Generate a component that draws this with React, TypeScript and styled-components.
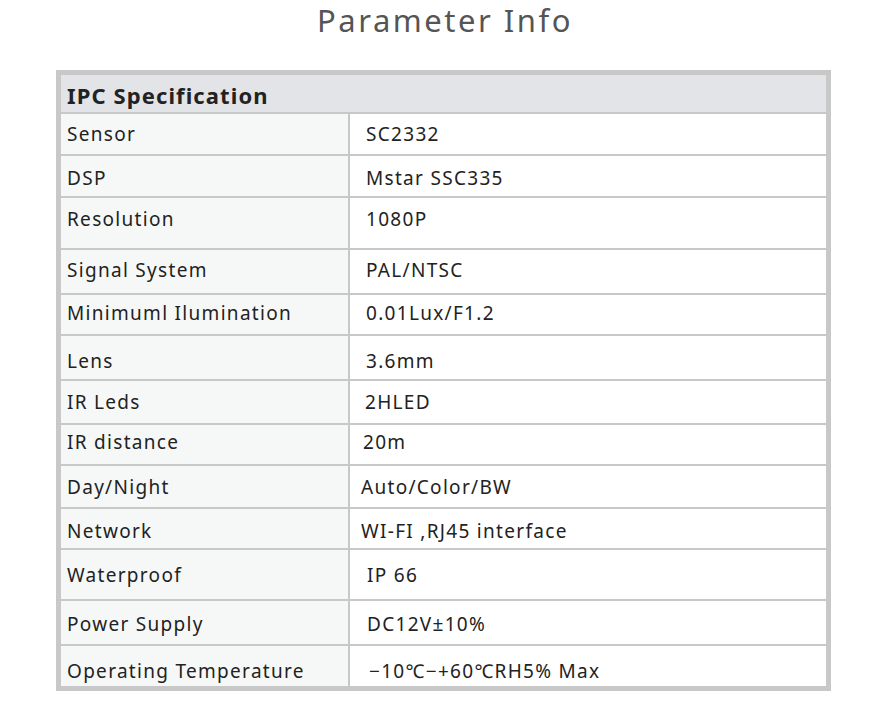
import React from "react";
import styled, { createGlobalStyle } from "styled-components";

const Global = createGlobalStyle`
  html, body { margin: 0; padding: 0; background: #ffffff; }
  body { font-family: "Noto Sans", "Noto Sans CJK KR", sans-serif; }
`;

const Page = styled.div`
  width: 882px;
  display: flex;
  flex-direction: column;
  align-items: flex-start;
`;

const Title = styled.h1`
  align-self: stretch;
  margin: 0;
  padding-top: 1px;
  height: 69px;
  text-align: center;
  font-size: 31px;
  line-height: 38px;
  font-weight: 400;
  letter-spacing: 2.5px;
  color: #555555;
  padding-left: 8px;
`;

const Table = styled.div`
  margin-left: 56px;
  width: 765px;
  border: 5px solid #c8c8c8;
  display: flex;
  flex-direction: column;
  background: #ffffff;
`;

const Header = styled.div`
  box-sizing: border-box;
  height: 39px;
  background: #e3e4e7;
  border-bottom: 2px solid #c8c8c8;
  display: flex;
  align-items: center;
  padding-left: 6px;
  padding-top: 3px;
  font-size: 22px;
  font-weight: 700;
  letter-spacing: 1.1px;
  color: #222222;
`;

const Row = styled.div<{ $h: number; $last?: boolean }>`
  display: grid;
  grid-template-columns: 287px 476px;
  column-gap: 2px;
  background: #c8c8c8;
  height: ${(p) => p.$h}px;
  border-bottom: ${(p) => (p.$last ? "0" : "2px solid #c8c8c8")};
  box-sizing: content-box;
`;

const Cell = styled.div<{ $label?: boolean; $indent: number; $shift: number }>`
  display: flex;
  align-items: center;
  background: ${(p) => (p.$label ? "#f6f8f8" : "#ffffff")};
  padding-left: ${(p) => p.$indent}px;
  padding-top: ${(p) => (p.$shift > 0 ? p.$shift : 0)}px;
  padding-bottom: ${(p) => (p.$shift < 0 ? -p.$shift : 0)}px;
  font-size: 19px;
  letter-spacing: 1.3px;
  color: #222222;
  white-space: nowrap;
`;

type Spec = { label: string; value: string; h: number; vi: number; shift: number };

const rows: Spec[] = [
  { label: "Sensor", value: "SC2332", h: 40, vi: 16, shift: 0 },
  { label: "DSP", value: "Mstar SSC335", h: 40, vi: 16, shift: 4 },
  { label: "Resolution", value: "1080P", h: 50, vi: 16, shift: -8 },
  { label: "Signal System", value: "PAL/NTSC", h: 43, vi: 16, shift: -3 },
  { label: "Minimuml Ilumination", value: "0.01Lux/F1.2", h: 39, vi: 16, shift: -4 },
  { label: "Lens", value: "3.6mm", h: 43, vi: 16, shift: 6 },
  { label: "IR Leds", value: "2HLED", h: 42, vi: 15, shift: 0 },
  { label: "IR distance", value: "20m", h: 39, vi: 13, shift: -6 },
  { label: "Day/Night", value: "Auto/Color/BW", h: 41, vi: 11, shift: 0 },
  { label: "Network", value: "WI-FI ,RJ45 interface", h: 39, vi: 11, shift: 4 },
  { label: "Waterproof", value: "IP 66", h: 49, vi: 17, shift: 1 },
  { label: "Power Supply", value: "DC12V±10%", h: 43, vi: 17, shift: 2 },
  { label: "Operating Temperature", value: "−10℃−+60℃RH5% Max", h: 40, vi: 19, shift: 10 },
];

export default function App() {
  return (
    <Page>
      <Global />
      <Title>Parameter Info</Title>
      <Table>
        <Header>IPC Specification</Header>
        {rows.map((r, i) => (
          <Row key={r.label} $h={r.h} $last={i === rows.length - 1}>
            <Cell $label $indent={6} $shift={r.shift}>
              {r.label}
            </Cell>
            <Cell $indent={r.vi} $shift={r.shift}>
              {r.value}
            </Cell>
          </Row>
        ))}
      </Table>
    </Page>
  );
}
